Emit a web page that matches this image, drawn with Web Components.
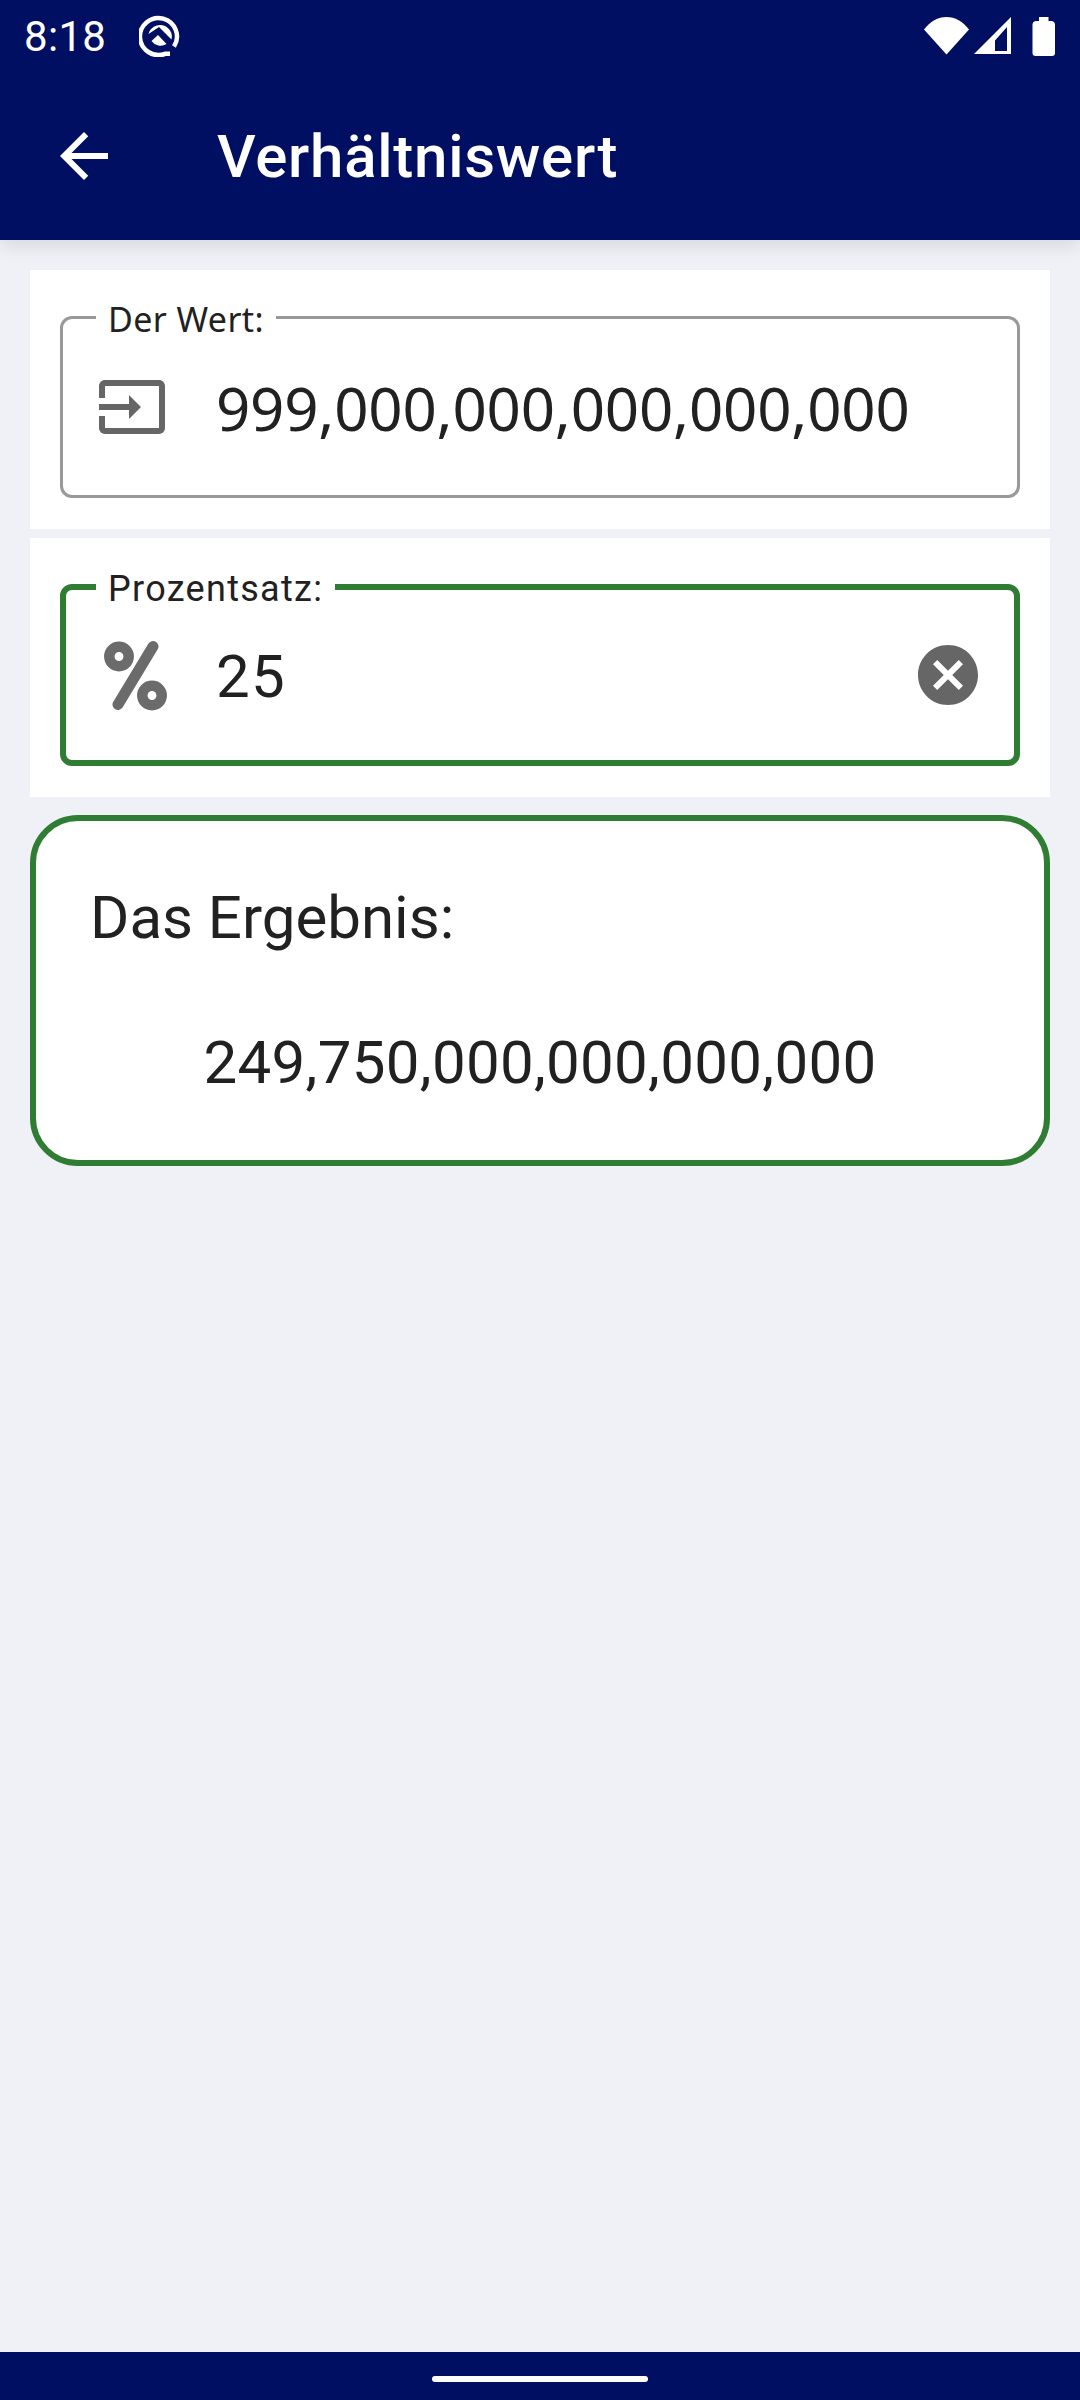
<!DOCTYPE html>
<html lang="de">
<head>
<meta charset="utf-8">
<title>Verhältniswert</title>
<style>
    html, body {
        margin: 0;
        height: 100%;
    }

    body {
        width: 1080px;
        height: 2400px;
        overflow: hidden;
        background: #eff1f6;
        font-family: Roboto, "Liberation Sans", sans-serif;
        color: #212121;
    }

    ratio-screen {
        height: 2400px;
    }
</style>
</head>
<body>
<ratio-screen>
    <app-header slot="header" title="Verhältniswert" time="8:18"></app-header>

    <form-card>
        <outlined-field label="Der Wert:" value="999,000,000,000,000,000" icon="input"></outlined-field>
    </form-card>
    <form-card>
        <outlined-field label="Prozentsatz:" value="25" icon="percent" focused></outlined-field>
    </form-card>

    <result-card heading="Das Ergebnis:" value="249,750,000,000,000,000"></result-card>

    <gesture-bar slot="footer"></gesture-bar>
</ratio-screen>

<script>
class RatioScreen extends HTMLElement {
    constructor() {
        super();
        this.shadow = this.attachShadow({ mode: "open" });
    }

    connectedCallback() {
        this.shadow.innerHTML = `
            <style>
                :host {
                    display: flex;
                    flex-direction: column;
                    width: 1080px;
                }

                main {
                    flex: 1;
                    display: flex;
                    flex-direction: column;
                    gap: 9px;
                    padding: 30px 30px 0;
                }
            </style>
            <slot name="header"></slot>
            <main><slot></slot></main>
            <slot name="footer"></slot>
        `
    }
}

class AppHeader extends HTMLElement {
    constructor() {
        super();
        this.shadow = this.attachShadow({ mode: "open" });
    }

    connectedCallback() {
        const title = this.getAttribute("title");
        const time = this.getAttribute("time");

        this.shadow.innerHTML = `
            <style>
                :host {
                    display: block;
                    background: #000f62;
                    color: white;
                    box-shadow: 0 6px 18px rgba(0, 0, 0, 0.1);
                    position: relative;
                }

                .status {
                    height: 72px;
                    display: flex;
                    align-items: center;
                    padding: 0 24px 0 24px;
                    font-size: 42px;
                }

                .time {
                    width: 115px;
                    letter-spacing: 0.3px;
                }

                .right {
                    margin-left: auto;
                    display: flex;
                    align-items: center;
                }

                svg {
                    display: block;
                    fill: white;
                }

                .toolbar {
                    height: 168px;
                    display: flex;
                    align-items: center;
                    padding-left: 48px;
                    gap: 97px;
                }

                h1 {
                    margin: 0;
                    font-size: 60px;
                    font-weight: 500;
                    letter-spacing: 0.75px;
                }
            </style>
            <div class="status">
                <span class="time">${time}</span>
                <svg width="42" height="42" viewBox="0 0 42 42">
                    <path d="M35 31.500A18.500 18.500 0 1 0 26 38.800H31" fill="none" stroke="white" stroke-width="4.500"/>
                    <path d="M9.500 19A11.500 11.500 0 0 1 32.500 24.500L20 12z"/>
                    <path d="M12.500 26L19 20L27.500 29A11 11 0 0 1 12.500 26z"/>
                </svg>
                <div class="right">
                    <svg width="46" height="38" viewBox="0 0 46 38"><path d="M0 12.500C6 4.500 14 0 22.500 0S39 4.500 45 12.500L22.500 37.500z"/></svg>
                    <svg width="38" height="38" viewBox="0 0 38 38" style="margin-left:4px"><path fill-rule="evenodd" d="M37 0v37H0zM33 10L21 23.500V34H33z"/></svg>
                    <svg width="24" height="39" viewBox="0 0 24 39" style="margin-left:20px"><path d="M7 0h9.500v4H20a3.500 3.500 0 0 1 3 3v29a3 3 0 0 1-3 3H3.500a3 3 0 0 1-3-3V7a3.500 3.500 0 0 1 3-3H7z"/></svg>
                </div>
            </div>
            <div class="toolbar">
                <svg width="72" height="72" viewBox="0 0 24 24"><path d="M20 11H7.830l5.590-5.590L12 4l-8 8 8 8 1.410-1.410L7.830 13H20v-2z"/></svg>
                <h1>${title}</h1>
            </div>
        `
    }
}

class FormCard extends HTMLElement {
    constructor() {
        super();
        this.shadow = this.attachShadow({ mode: "open" });
    }

    connectedCallback() {
        this.shadow.innerHTML = `
            <style>
                :host {
                    display: block;
                    background: white;
                    padding: 46px 30px 31px;
                }
            </style>
            <slot></slot>
        `
    }
}

const fieldIcons = {
    input: `<svg width="72" height="72" viewBox="0 0 24 24" fill="#666"><path d="M21 3.010H3c-1.100 0-2 .9-2 2V9h2V4.990h18v14.030H3V15H1v4.010c0 1.100.9 1.980 2 1.980h18c1.100 0 2-.88 2-1.980v-14c0-1.110-.9-2-2-2zM11 16l4-4-4-4v3H1v2h10v3z"/></svg>`,
    percent: `<svg width="72" height="72" viewBox="0 0 72 72" fill="none" stroke="#6b6b6b">
        <circle cx="23" cy="17.500" r="9.700" stroke-width="10.500"/>
        <circle cx="56" cy="56.500" r="9.700" stroke-width="10.500"/>
        <path d="M22 65.500L57 7.500" stroke-width="11" stroke-linecap="round"/>
    </svg>`,
    clear: `<svg width="72" height="72" viewBox="0 0 24 24" fill="#666"><path d="M12 2C6.470 2 2 6.470 2 12s4.470 10 10 10 10-4.470 10-10S17.530 2 12 2zm5 13.590L15.590 17 12 13.410 8.410 17 7 15.590 10.590 12 7 8.410 8.410 7 12 10.590 15.590 7 17 8.410 13.410 12 17 15.590z"/></svg>`
};

class OutlinedField extends HTMLElement {
    constructor() {
        super();
        this.shadow = this.attachShadow({ mode: "open" });
    }

    connectedCallback() {
        const label = this.getAttribute("label");
        const value = this.getAttribute("value");
        const icon = this.getAttribute("icon");
        const focused = this.hasAttribute("focused");

        this.shadow.innerHTML = `
            <style>
                :host {
                    display: block;
                    position: relative;
                    font-family: ${focused ? 'Roboto' : '"Noto Sans"'}, sans-serif;
                }

                .box {
                    box-sizing: border-box;
                    height: 182px;
                    display: flex;
                    align-items: center;
                    padding: 0 33px;
                    border: ${focused ? "6px solid #2e7d32" : "3px solid #999"};
                    border-radius: 12px;
                    ${focused ? "padding: 0 30px;" : ""}
                }

                .label {
                    position: absolute;
                    left: 36px;
                    top: ${focused ? "-16px" : "-22px"};
                    padding: 0 12px;
                    background: white;
                    font-size: ${focused ? "36px" : "34px"};
                    line-height: ${focused ? "42px" : "50px"};
                    letter-spacing: ${focused ? "1.3px" : "0.4px"};
                }

                .value {
                    flex: 1;
                    margin-left: 48px;
                    padding-top: ${focused ? "4px" : "2px"};
                    font-size: 60px;
                    line-height: 70px;
                    letter-spacing: ${focused ? "1.2px" : "-0.2px"};
                }

                svg {
                    display: block;
                }
            </style>
            <div class="box">
                ${fieldIcons[icon]}
                <span class="value">${value}</span>
                ${focused ? fieldIcons.clear : ""}
            </div>
            <span class="label">${label}</span>
        `
    }
}

class ResultCard extends HTMLElement {
    constructor() {
        super();
        this.shadow = this.attachShadow({ mode: "open" });
    }

    connectedCallback() {
        const heading = this.getAttribute("heading");
        const value = this.getAttribute("value");

        this.shadow.innerHTML = `
            <style>
                :host {
                    display: block;
                    box-sizing: border-box;
                    height: 351px;
                    margin-top: 9px;
                    padding: 62px 54px 0 54px;
                    background: white;
                    border: 6px solid #2e7d32;
                    border-radius: 48px;
                }

                h2 {
                    margin: 0;
                    font-size: 60px;
                    font-weight: 400;
                    line-height: 70px;
                }

                p {
                    margin: 75px 0 0;
                    font-size: 60px;
                    line-height: 70px;
                    letter-spacing: 0.3px;
                    text-align: center;
                }
            </style>
            <h2>${heading}</h2>
            <p>${value}</p>
        `
    }
}

class GestureBar extends HTMLElement {
    constructor() {
        super();
        this.shadow = this.attachShadow({ mode: "open" });
    }

    connectedCallback() {
        this.shadow.innerHTML = `
            <style>
                :host {
                    display: flex;
                    justify-content: center;
                    height: 48px;
                    padding-top: 24px;
                    box-sizing: border-box;
                    background: #000f62;
                }

                div {
                    width: 216px;
                    height: 6px;
                    border-radius: 3px;
                    background: white;
                }
            </style>
            <div></div>
        `
    }
}

window.customElements.define("ratio-screen", RatioScreen);
window.customElements.define("app-header", AppHeader);
window.customElements.define("form-card", FormCard);
window.customElements.define("outlined-field", OutlinedField);
window.customElements.define("result-card", ResultCard);
window.customElements.define("gesture-bar", GestureBar);
</script>
</body>
</html>
